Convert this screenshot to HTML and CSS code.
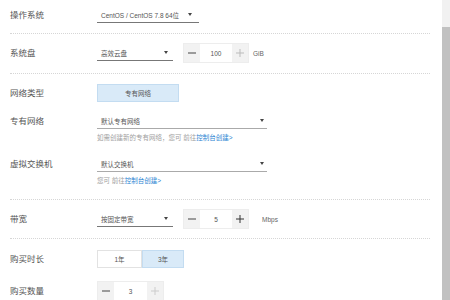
FILE: index.html
```html
<!DOCTYPE html>
<html lang="zh-CN">
<head>
    <meta charset="UTF-8">
    <meta name="viewport" content="width=device-width, initial-scale=1.0">
    <title>购买配置</title>
    <link rel="stylesheet" href="styles.css">
</head>
<body>
<div class="page">
    <div class="form">
        <div class="section s1">
            <div class="row">
                <div class="label">操作系统</div>
                <div class="select w-os"><span>CentOS / CentOS 7.8 64位</span><i class="caret"></i></div>
            </div>
        </div>

        <div class="section s2">
            <div class="row">
                <div class="label">系统盘</div>
                <div class="select w-short"><span>高效云盘</span><i class="caret"></i></div>
                <div class="stepper">
                    <span class="btn minus"><svg width="8" height="8" viewBox="0 0 8 8"><path d="M0 4h8" stroke="#444" stroke-width="1"/></svg></span>
                    <span class="value">100</span>
                    <span class="btn plus"><svg width="8" height="8" viewBox="0 0 8 8"><path d="M0 4h8M4 0v8" stroke="#bbb" stroke-width="1"/></svg></span>
                </div>
                <span class="unit">GiB</span>
            </div>
        </div>

        <div class="section s3">
            <div class="row">
                <div class="label">网络类型</div>
                <div class="choice active w-net">专有网络</div>
            </div>
            <div class="row top r4">
                <div class="label">专有网络</div>
                <div class="field">
                    <div class="select w-long light"><span>默认专有网络</span><i class="caret"></i></div>
                    <div class="hint">如需创建新的专有网络，您可 前往<a href="#">控制台创建&gt;</a></div>
                </div>
            </div>
            <div class="row top r5">
                <div class="label">虚拟交换机</div>
                <div class="field">
                    <div class="select w-long light"><span>默认交换机</span><i class="caret"></i></div>
                    <div class="hint">您可 前往<a href="#">控制台创建&gt;</a></div>
                </div>
            </div>
        </div>

        <div class="section s4">
            <div class="row">
                <div class="label">带宽</div>
                <div class="select w-short"><span>按固定带宽</span><i class="caret"></i></div>
                <div class="stepper">
                    <span class="btn minus"><svg width="8" height="8" viewBox="0 0 8 8"><path d="M0 4h8" stroke="#444" stroke-width="1"/></svg></span>
                    <span class="value">5</span>
                    <span class="btn plus"><svg width="8" height="8" viewBox="0 0 8 8"><path d="M0 4h8M4 0v8" stroke="#333" stroke-width="1"/></svg></span>
                </div>
                <span class="unit wide">Mbps</span>
            </div>
        </div>

        <div class="section s5">
            <div class="row">
                <div class="label">购买时长</div>
                <div class="segment">
                    <div class="choice w-y1">1年</div>
                    <div class="choice active w-y3">3年</div>
                </div>
            </div>
            <div class="row r8">
                <div class="label">购买数量</div>
                <div class="stepper first">
                    <span class="btn minus"><svg width="8" height="8" viewBox="0 0 8 8"><path d="M0 4h8" stroke="#444" stroke-width="1"/></svg></span>
                    <span class="value">3</span>
                    <span class="btn plus"><svg width="8" height="8" viewBox="0 0 8 8"><path d="M0 4h8M4 0v8" stroke="#ccc" stroke-width="1"/></svg></span>
                </div>
            </div>
        </div>
    </div>
    <div class="scrollbar"><div class="thumb"></div></div>
</div>
</body>
</html>
```

FILE: styles.css
```css
body {
    margin: 0;
    padding: 0;
    background-color: #fff;
    font-family: "Liberation Sans", "Noto Sans CJK SC", sans-serif;
    color: #333;
}
.page {
    display: flex;
    height: 300px;
    overflow: hidden;
}
.form {
    flex: 1;
    padding: 0 12px 0 10px;
}
.section {
    border-bottom: 1px dotted #d6d6d6;
}
.s1 { padding: 6px 0 9px; }
.s2 { padding: 9px 0 10px; }
.s3 { padding: 10px 0 13px; }
.s4 { padding: 9px 0 9px; }
.s5 { padding: 11px 0 0; border-bottom: none; }

.row {
    display: flex;
    align-items: center;
    min-height: 18px;
}
.row.top {
    align-items: flex-start;
}
.r4 { margin-top: 11px; }
.r5 { margin-top: 13px; }
.r8 { margin-top: 13px; }

.label {
    width: 87px;
    flex-shrink: 0;
    font-size: 8.5px;
    line-height: 16px;
    color: #555;
}
.field {
    display: flex;
    flex-direction: column;
}

/* underlined dropdown */
.select {
    display: flex;
    align-items: center;
    justify-content: space-between;
    box-sizing: border-box;
    height: 16px;
    padding: 0 6px 0 4px;
    border-bottom: 1px solid #777;
    font-size: 6.5px;
    color: #555;
}
.select.light {
    border-bottom: 1px solid #aaa;
    padding-right: 3px;
}
.w-os { width: 102px; padding-right: 7px; }
.w-short { width: 76px; padding-right: 5px; }
.w-long { width: 170px; }
.caret {
    width: 0;
    height: 0;
    border-left: 2.5px solid transparent;
    border-right: 2.5px solid transparent;
    border-top: 3px solid #444;
}
.hint {
    margin-top: 4px;
    font-size: 6.5px;
    line-height: 10px;
    color: #a0a0a0;
}
.hint a {
    color: #2a84d2;
    text-decoration: none;
}

/* number stepper */
.stepper {
    display: flex;
    height: 20px;
    margin-left: 10px;
    border: 1px solid #ededed;
    box-sizing: border-box;
}
.stepper.first {
    margin-left: 0;
}
.stepper .btn {
    display: flex;
    align-items: center;
    justify-content: center;
    width: 16px;
    background-color: #f2f2f2;
}
.stepper .value {
    display: flex;
    align-items: center;
    justify-content: center;
    width: 32px;
    background-color: #fff;
    font-size: 6.5px;
    color: #555;
}
.stepper.first .value {
    width: 33px;
}
.unit {
    margin-left: 4px;
    font-size: 6.5px;
    color: #666;
}
.unit.wide {
    margin-left: 13px;
}

/* option buttons */
.choice {
    display: flex;
    align-items: center;
    justify-content: center;
    box-sizing: border-box;
    height: 18px;
    font-size: 6.5px;
    color: #555;
    background-color: #fff;
    border: 1px solid #e2e2e2;
}
.choice.active {
    background-color: #d9eaf8;
    border-color: #c3dcf1;
}
.w-net { width: 82px; }
.segment {
    display: flex;
}
.w-y1 { width: 45px; }
.w-y3 { width: 42px; }

/* fake scrollbar of the scrolled panel */
.scrollbar {
    width: 8px;
    background-color: #f1f1f1;
    display: flex;
    flex-direction: column;
}
.thumb {
    margin-top: 27px;
    flex: 1;
    background-color: #c1c1c1;
}
```
